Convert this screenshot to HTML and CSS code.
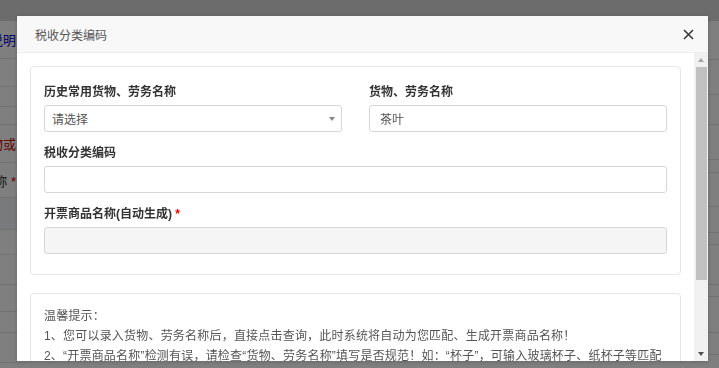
FILE: index.html
```html
<!DOCTYPE html>
<html lang="zh-CN">
<head>
    <meta charset="UTF-8">
    <meta name="viewport" content="width=device-width, initial-scale=1.0">
    <title>税收分类编码</title>
    <link rel="stylesheet" href="styles.css">
</head>
<body>
    <!-- 底层页面 -->
    <div class="page">
        <div class="topbar"></div>
        <div class="page-body">
            <div class="col-left">
                <div class="prow h38"><span class="plabel link">说明</span></div>
                <div class="prow h28"></div>
                <div class="prow h20"></div>
                <div class="prow h18"></div>
                <div class="prow h38"><span class="plabel warn">物或</span></div>
                <div class="prow h35"><span class="plabel">称 <i>*</i></span></div>
                <div class="prow h32 tint"></div>
                <div class="prow h25"></div>
                <div class="prow h30"></div>
                <div class="prow h27"></div>
                <div class="prow h21"></div>
                <div class="prow h30"></div>
            </div>
            <div class="col-right">
                <div class="prow h39"></div>
                <div class="prow h35"></div>
                <div class="prow h30"></div>
                <div class="prow h35"></div>
                <div class="prow h13"></div>
                <div class="prow h34"></div>
                <div class="prow h26"></div>
                <div class="prow h12"></div>
                <div class="prow h40"></div>
                <div class="prow h12"></div>
                <div class="prow h36"></div>
                <div class="prow h22"></div>
            </div>
        </div>
    </div>

    <div class="mask"></div>

    <!-- 弹窗 -->
    <div class="modal">
        <div class="modal-header">
            <span class="modal-title">税收分类编码</span>
            <button class="close" type="button">
                <svg width="11" height="11" viewBox="0 0 11 11">
                    <path d="M1 1 L10 10 M10 1 L1 10" stroke="#333" stroke-width="1.5" fill="none"/>
                </svg>
            </button>
        </div>
        <div class="modal-main">
            <div class="modal-body">
                <div class="panel">
                    <div class="row-2">
                        <div class="form-group">
                            <label>历史常用货物、劳务名称</label>
                            <div class="select">请选择<span class="caret"></span></div>
                        </div>
                        <div class="form-group">
                            <label>货物、劳务名称</label>
                            <input type="text" class="input" value="茶叶">
                        </div>
                    </div>
                    <div class="form-group">
                        <label>税收分类编码</label>
                        <input type="text" class="input">
                    </div>
                    <div class="form-group">
                        <label>开票商品名称(自动生成) <span class="req">*</span></label>
                        <input type="text" class="input" disabled>
                    </div>
                </div>

                <div class="panel tips">
                    <p>温馨提示：</p>
                    <p>1、您可以录入货物、劳务名称后，直接点击查询，此时系统将自动为您匹配、生成开票商品名称！</p>
                    <p>2、“开票商品名称”检测有误，请检查“货物、劳务名称”填写是否规范！如：“杯子”，可输入玻璃杯子、纸杯子等匹配相应的税收分类编码。</p>
                    <p>3、如系统无法自动匹配，请在“税收分类编码”中手动输入或选择对应的编码。</p>
                </div>
            </div>
            <!-- 滚动条 -->
            <div class="scrollbar">
                <div class="sb-btn"><span class="arrow-up"></span></div>
                <div class="sb-track"><div class="sb-thumb"></div></div>
                <div class="sb-btn"><span class="arrow-down"></span></div>
            </div>
        </div>
    </div>
</body>
</html>
```

FILE: styles.css
```css
* {
    box-sizing: border-box;
}
body {
    margin: 0;
    font-family: "Liberation Sans", "Noto Sans CJK SC", sans-serif;
    font-size: 12px;
    color: #333;
    background: #fff;
    overflow: hidden;
}

/* 底层页面 */
.page {
    height: 368px;
}
.topbar {
    height: 21px;
    background: #d9d9d9;
}
.page-body {
    display: flex;
    justify-content: space-between;
}
.col-left {
    width: 17px;
}
.col-right {
    width: 11px;
}
.prow {
    border-bottom: 1px solid #e2e2e2;
    display: flex;
    align-items: center;
    justify-content: flex-end;
    overflow: hidden;
    white-space: nowrap;
}
.plabel {
    font-size: 13px;
    padding-right: 1px;
}
.plabel i {
    color: #d00;
    font-style: normal;
}
.link {
    color: #0000cc;
}
.warn {
    color: #c00;
}
.tint {
    background: #f0f4f8;
}
.h12 { height: 12px; }
.h13 { height: 13px; }
.h18 { height: 18px; }
.h20 { height: 20px; }
.h21 { height: 21px; }
.h22 { height: 22px; }
.h25 { height: 25px; }
.h26 { height: 26px; }
.h27 { height: 27px; }
.h28 { height: 28px; }
.h30 { height: 30px; }
.h32 { height: 32px; }
.h34 { height: 34px; }
.h35 { height: 35px; }
.h36 { height: 36px; }
.h38 { height: 38px; }
.h39 { height: 39px; }
.h40 { height: 40px; }

.mask {
    position: fixed;
    inset: 0;
    background: rgba(0, 0, 0, 0.5);
}

/* 弹窗 */
.modal {
    position: absolute;
    left: 17px;
    top: 16px;
    width: 691px;
    height: 345px;
    background: #fff;
    display: flex;
    flex-direction: column;
    box-shadow: 0 1px 4px rgba(0, 0, 0, 0.2);
}
.modal-header {
    height: 37px;
    flex: none;
    display: flex;
    align-items: center;
    justify-content: space-between;
    padding: 0 13px 0 18px;
    background: #f8f8f8;
    border-bottom: 1px solid #eee;
}
.modal-title {
    color: #555;
    font-size: 12px;
}
.close {
    border: none;
    background: none;
    padding: 0;
    width: 13px;
    height: 13px;
    display: flex;
    align-items: center;
    justify-content: center;
    cursor: pointer;
}
.modal-main {
    flex: 1;
    min-height: 0;
    display: flex;
}
.modal-body {
    flex: 1;
    min-width: 0;
    overflow: hidden;
    padding: 13px 13px 13px 13px;
}

/* 滚动条 */
.scrollbar {
    width: 14px;
    flex: none;
    display: flex;
    flex-direction: column;
    background: #f1f1f1;
}
.sb-btn {
    height: 14px;
    display: flex;
    align-items: center;
    justify-content: center;
}
.arrow-up {
    border-left: 3.5px solid transparent;
    border-right: 3.5px solid transparent;
    border-bottom: 4px solid #a3a3a3;
}
.arrow-down {
    border-left: 3.5px solid transparent;
    border-right: 3.5px solid transparent;
    border-top: 4px solid #505050;
}
.sb-track {
    flex: 1;
    padding: 0 1px 0 2px;
}
.sb-thumb {
    height: 213px;
    background: #c1c1c1;
}

.panel {
    border: 1px solid #e6e6e6;
    border-radius: 4px;
    padding: 17px 13px 20px 13px;
}
.row-2 {
    display: grid;
    grid-template-columns: 1fr 1fr;
    column-gap: 27px;
}
.form-group {
    margin-bottom: 13px;
}
.panel > .form-group:last-child {
    margin-bottom: 0;
}
label {
    display: block;
    font-weight: bold;
    line-height: 17px;
    margin-bottom: 4px;
    color: #333;
}
.req {
    color: #e00;
}
.select,
.input {
    display: flex;
    align-items: center;
    width: 100%;
    height: 27px;
    border: 1px solid #d6d6d6;
    border-radius: 3px;
    font-family: inherit;
    font-size: 12px;
    color: #555;
    background: #fff;
}
.select {
    position: relative;
    padding-left: 7px;
}
.input {
    padding: 0 10px;
    outline: none;
}
.input:disabled {
    background: #f5f5f5;
}
.caret {
    position: absolute;
    right: 6px;
    top: 11px;
    border-left: 3.5px solid transparent;
    border-right: 3.5px solid transparent;
    border-top: 4px solid #888;
}
.tips {
    margin-top: 18px;
    padding: 12px 13px;
    color: #555;
    letter-spacing: 0.2px;
}
.tips p {
    margin: 0;
    line-height: 20px;
}
```
